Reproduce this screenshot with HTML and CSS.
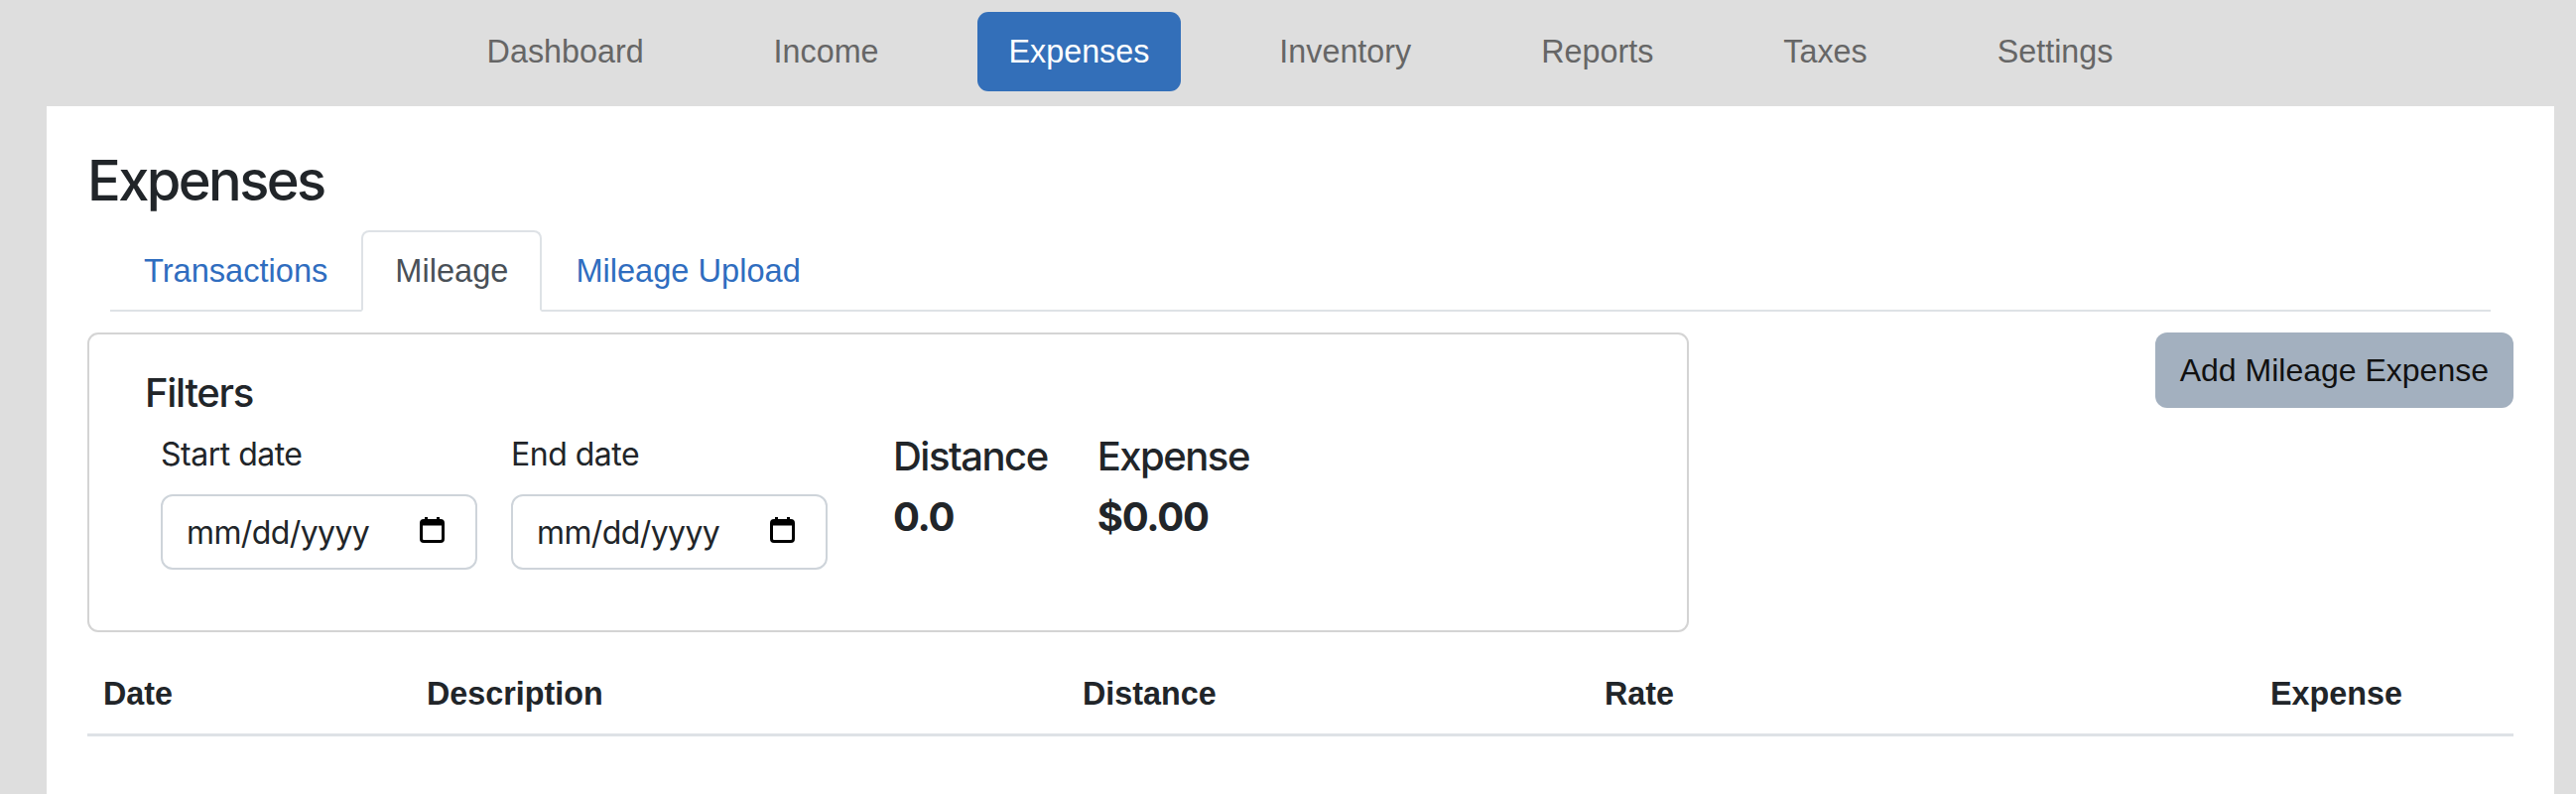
FILE: index.html
```html
<!DOCTYPE html>
<html lang="en">
<head>
<meta charset="utf-8">
<title>Expenses - Mileage</title>
<link rel="stylesheet" href="styles.css">
</head>
<body>
<nav class="topnav">
  <a class="topnav-item" href="#">Dashboard</a>
  <a class="topnav-item" href="#">Income</a>
  <a class="topnav-item active" href="#">Expenses</a>
  <a class="topnav-item" href="#">Inventory</a>
  <a class="topnav-item" href="#">Reports</a>
  <a class="topnav-item" href="#">Taxes</a>
  <a class="topnav-item" href="#">Settings</a>
</nav>
<main class="panel">
  <h3 class="page-title">Expenses</h3>
  <ul class="tabs">
    <li><a class="tab" href="#">Transactions</a></li>
    <li><a class="tab active" href="#">Mileage</a></li>
    <li><a class="tab" href="#">Mileage Upload</a></li>
  </ul>
  <div class="toolbar">
    <section class="filter-card">
      <h5 class="card-title">Filters</h5>
      <div class="filter-row">
        <div class="field">
          <label class="field-label">Start date</label>
          <div class="date-input"><span>mm/dd/yyyy</span>
            <svg class="cal" width="25" height="26" viewBox="0 0 25 26"><rect x="5" y="0" width="3" height="4" fill="#000"/><rect x="17" y="0" width="3" height="4" fill="#000"/><rect x="1.5" y="3.5" width="22" height="21" rx="2.5" fill="none" stroke="#000" stroke-width="3"/><rect x="1.5" y="3.5" width="22" height="5" fill="#000"/></svg>
          </div>
        </div>
        <div class="field field-end">
          <label class="field-label">End date</label>
          <div class="date-input"><span>mm/dd/yyyy</span>
            <svg class="cal" width="25" height="26" viewBox="0 0 25 26"><rect x="5" y="0" width="3" height="4" fill="#000"/><rect x="17" y="0" width="3" height="4" fill="#000"/><rect x="1.5" y="3.5" width="22" height="21" rx="2.5" fill="none" stroke="#000" stroke-width="3"/><rect x="1.5" y="3.5" width="22" height="5" fill="#000"/></svg>
          </div>
        </div>
        <div class="stat">
          <h5 class="stat-label">Distance</h5>
          <div class="stat-value">0.0</div>
        </div>
        <div class="stat">
          <h5 class="stat-label">Expense</h5>
          <div class="stat-value">$0.00</div>
        </div>
      </div>
    </section>
    <button class="add-btn" type="button">Add Mileage Expense</button>
  </div>
  <table class="data-table">
    <thead>
      <tr>
        <th class="c-date">Date</th>
        <th class="c-desc">Description</th>
        <th class="c-dist">Distance</th>
        <th class="c-rate">Rate</th>
        <th class="c-exp">Expense</th>
      </tr>
    </thead>
    <tbody></tbody>
  </table>
</main>
</body>
</html>
```

FILE: styles.css
```css
* { box-sizing: border-box; }
html, body { margin: 0; padding: 0; }
body {
  background: #dedede;
  font-family: Inter, "Noto Sans", sans-serif;
  color: #212529;
  height: 800px;
  overflow: hidden;
}

.topnav {
  height: 107px;
  display: flex;
  align-items: flex-start;
  justify-content: center;
  gap: 67px;
  padding: 12px 0 0 24px;
}
.topnav-item {
  font-family: "Liberation Sans", Arial, sans-serif;
  font-size: 32.3px;
  line-height: 48px;
  padding: 16px 32px;
  color: #666666;
  text-decoration: none;
  border-radius: 11px;
}
.topnav-item.active {
  background: #336fb9;
  color: #ffffff;
}

.panel {
  background: #ffffff;
  margin: 0 22px 0 47px;
  padding: 42px 41px 0;
  height: 693px;
}

.page-title {
  margin: 0 0 16px;
  font-size: 56px;
  line-height: 67px;
  font-weight: 500;
  letter-spacing: -2.6px;
}

.tabs {
  list-style: none;
  margin: 0 23px;
  padding: 0;
  display: flex;
  border-bottom: 2px solid #dee2e6;
}
.tab {
  display: block;
  font-family: "Liberation Sans", Arial, sans-serif;
  font-size: 32.6px;
  line-height: 48px;
  padding: 15px 32px;
  border: 2px solid transparent;
  border-radius: 8px 8px 0 0;
  margin-bottom: -2px;
  color: #2f6dbf;
  text-decoration: none;
}
.tab.active {
  color: #495057;
  border-color: #dee2e6 #dee2e6 #ffffff;
  background: #ffffff;
}

.toolbar {
  display: flex;
  justify-content: space-between;
  align-items: flex-start;
  margin-top: 21px;
}

.filter-card {
  width: 1614px;
  height: 302px;
  border: 2px solid #d4d4d4;
  border-radius: 11px;
  padding: 35px 40px 0 56px;
}
.card-title {
  margin: 0 0 14px;
  font-size: 40px;
  line-height: 48px;
  font-weight: 500;
  letter-spacing: -1.3px;
}
.filter-row {
  display: flex;
  align-items: flex-start;
  padding-left: 16px;
}
.field { width: 319px; margin-right: 34px; }
.field-end { margin-right: 66px; }
.field-label {
  display: block;
  font-size: 32px;
  line-height: 48px;
  margin-bottom: 16px;
  letter-spacing: -0.5px;
}
.date-input {
  height: 76px;
  border: 2px solid #ced4da;
  border-radius: 12px;
  display: flex;
  align-items: center;
  justify-content: space-between;
  padding: 0 31px 0 24px;
  font-size: 32px;
  letter-spacing: -0.6px;
  color: #212529;
}
.cal { display: block; margin-top: -4px; }

.stat { margin-right: 50px; padding-top: 2px; }
.stat-label {
  margin: 0 0 13px;
  font-size: 40px;
  line-height: 48px;
  font-weight: 500;
  letter-spacing: -1.5px;
}
.stat-value {
  font-size: 40px;
  line-height: 48px;
  font-weight: 700;
  letter-spacing: -1.2px;
}

.add-btn {
  font-family: "Liberation Sans", Arial, sans-serif;
  font-size: 32px;
  line-height: 48px;
  padding: 14px 25px;
  background: #a3b0bf;
  color: #111111;
  border: 0;
  border-radius: 12px;
}

.data-table {
  width: 100%;
  margin-top: 22px;
  border-collapse: collapse;
  table-layout: fixed;
}
.data-table th {
  font-family: "Liberation Sans", Arial, sans-serif;
  font-size: 32.3px;
  line-height: 48px;
  font-weight: 700;
  text-align: left;
  padding: 16px;
  color: #212529;
  border-bottom: 3px solid #dee2e6;
}
.c-date { width: 326px; }
.c-desc { width: 661px; }
.c-dist { width: 526px; }
.c-rate { width: 671px; }
.c-exp { width: 261px; }
```
